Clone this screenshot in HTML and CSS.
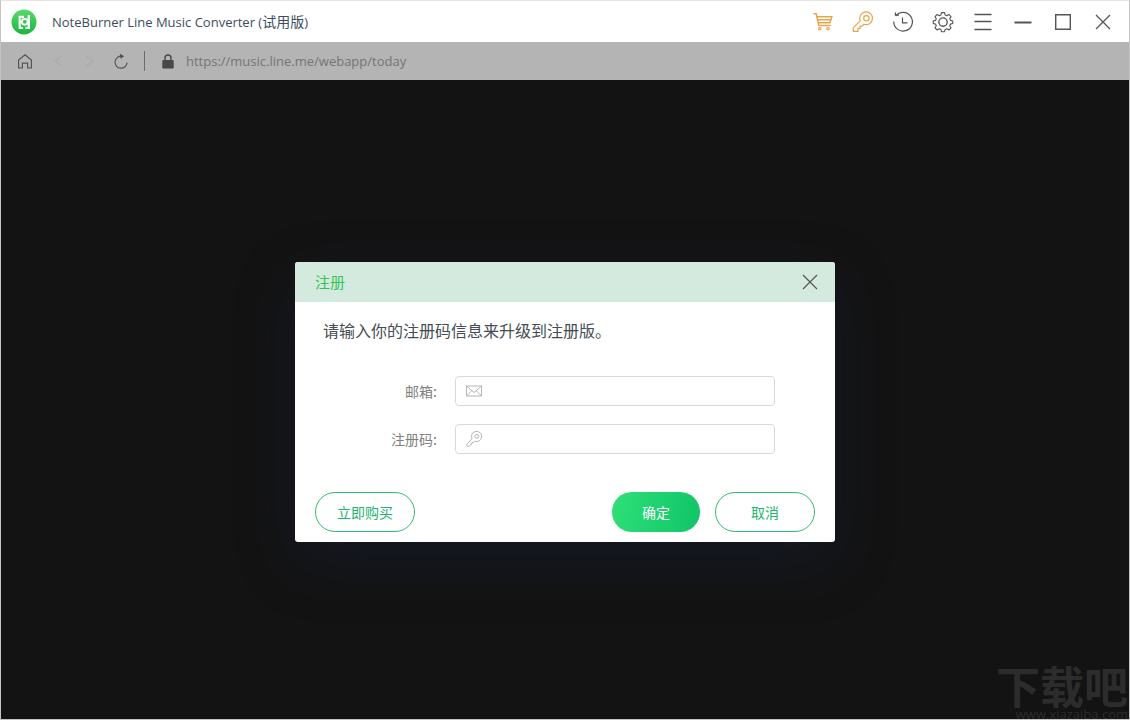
FILE: index.html
```html
<!DOCTYPE html>
<html lang="zh-CN">
<head>
  <meta charset="UTF-8">
  <meta name="viewport" content="width=device-width, initial-scale=1.0">
  <title>NoteBurner Line Music Converter</title>
  <link rel="stylesheet" href="styles.css">
</head>
<body>
  <div class="window">
    <header class="titlebar">
      <svg class="logo" viewBox="0 0 26 26">
        <defs>
          <linearGradient id="logoFill" x1="0" y1="0" x2="0" y2="1">
            <stop offset="0" stop-color="#5bd76c"/>
            <stop offset="1" stop-color="#17b840"/>
          </linearGradient>
        </defs>
        <circle cx="13" cy="13" r="12.5" fill="url(#logoFill)"/>
        <path d="M7.6 20V6.8H13V9H9.8V18H12V20zM16.6 6h2.4v14h-4.6v-2h2.2z" fill="#fff"/>
        <circle cx="13.8" cy="12.8" r="2.9" fill="none" stroke="#fff" stroke-width="1.9"/>
      </svg>
      <h1 class="title">NoteBurner Line Music Converter (<span class="edition">试用版</span>)</h1>
      <nav class="actions">
        <button class="action gold" aria-label="购物车">
          <svg viewBox="0 0 24 24">
            <path d="M2.5 3.8h2.7l2.6 11.8h12M5.9 6.8h14.9l-1.8 6H7.3M6.5 9.8h13.4" stroke-width="1.5"/>
            <circle cx="8.8" cy="18.8" r="1.2"/>
            <circle cx="17" cy="18.8" r="1.2"/>
          </svg>
        </button>
        <button class="action gold" aria-label="注册">
          <svg viewBox="0 0 24 24">
            <path d="M9.2 10.8A6.4 6.4 0 1 1 12.9 14.3L11 16.2H9v2.2H7v2.9H2.3v-3.6z"/>
            <circle cx="15.4" cy="8.3" r="2.7"/>
          </svg>
        </button>
        <button class="action" aria-label="历史">
          <svg viewBox="0 0 24 24">
            <path d="M4.8 6A9.3 9.3 0 1 1 2.8 11.5"/>
            <path d="M8 5.2H4.4V2.4M11.5 7.5v5.3h5"/>
          </svg>
        </button>
        <button class="action" aria-label="设置">
          <svg viewBox="0 0 24 24">
            <g transform="translate(1.1 .9) scale(.91)">
              <path d="M10.3 1.9h3.4l.6 2.6 1.8.8 2.3-1.4 2.4 2.4-1.4 2.3.8 1.8 2.5.6v2.9l-2.5.6-.8 1.8 1.4 2.3-2.4 2.4-2.3-1.4-1.8.8-.6 2.5h-3.4l-.6-2.5-1.8-.8-2.3 1.4-2.4-2.4 1.4-2.3-.8-1.8-2.5-.6V11l2.5-.6.8-1.8-1.4-2.3 2.4-2.4 2.3 1.4 1.8-.8z" stroke-linejoin="round"/>
              <circle cx="12" cy="12.3" r="4.6" stroke-width="1.5"/>
            </g>
          </svg>
        </button>
        <button class="action" aria-label="菜单">
          <svg viewBox="0 0 24 24"><path d="M3.5 4.5h17M3.5 11.5h17M3.5 19.5h17" stroke-width="1.3"/></svg>
        </button>
        <button class="action" aria-label="最小化">
          <svg viewBox="0 0 24 24"><path d="M3.5 12.5h17" stroke-width="2"/></svg>
        </button>
        <button class="action" aria-label="最大化">
          <svg viewBox="0 0 24 24"><path d="M4.7 4.7h14.6v14.6H4.7z" stroke-width="1.4"/></svg>
        </button>
        <button class="action" aria-label="关闭">
          <svg viewBox="0 0 24 24"><path d="M5 5l14 14M19 5L5 19" stroke-width="1.3"/></svg>
        </button>
      </nav>
    </header>

    <div class="toolbar">
      <button class="tool" aria-label="主页">
        <svg viewBox="0 0 24 24"><path d="M5.6 19V11L12 5.8l6.4 5.2v8h-3.8v-4.8H9.4V19z"/></svg>
      </button>
      <button class="tool faint" aria-label="后退" disabled>
        <svg viewBox="0 0 24 24"><path d="M17 6.5L10 12l7 5.5"/></svg>
      </button>
      <button class="tool faint" aria-label="前进" disabled>
        <svg viewBox="0 0 24 24"><path d="M9 6.5l7 5.5-7 5.5"/></svg>
      </button>
      <button class="tool" aria-label="刷新">
        <svg viewBox="0 0 24 24">
          <path d="M13 7.3A6 6 0 1 0 18 13.4"/>
          <path d="M11 4.8l4 2.4-3.4 2.6z" class="solid"/>
        </svg>
      </button>
      <span class="divider"></span>
      <svg class="lock" viewBox="0 0 12 16">
        <path d="M3 8V5a3 3 0 0 1 6 0V8" fill="none" stroke="#484848" stroke-width="1.4"/>
        <rect x="0.3" y="7" width="11.4" height="8.6" rx="1" fill="#484848"/>
      </svg>
      <input class="url" type="text" aria-label="网址" value="https://music.line.me/webapp/today" readonly>
    </div>

    <main class="stage">
      <form class="dialog" role="dialog" aria-labelledby="dialogTitle">
        <div class="dialog-head">
          <h2 class="dialog-title" id="dialogTitle">注册</h2>
          <button class="dialog-close" type="button" aria-label="关闭">
            <svg viewBox="0 0 24 24"><path d="M5 5l14 14M19 5L5 19"/></svg>
          </button>
        </div>
        <div class="dialog-body">
          <p class="message">请输入你的注册码信息来升级到注册版。</p>
          <div class="field">
            <label for="email">邮箱:</label>
            <div class="box">
              <svg viewBox="0 0 18 18"><path d="M1.5 4h15v10h-15zM1.5 4L9 10.5 16.5 4M1.5 14l5.2-5.4M16.5 14l-5.2-5.4"/></svg>
              <input id="email" type="email">
            </div>
          </div>
          <div class="field">
            <label for="code">注册码:</label>
            <div class="box">
              <svg viewBox="0 0 18 18">
                <path d="M7 8.8A5.1 5.1 0 1 1 9.6 11.2L8.3 12.5H7v1.6H5.6L4.6 16q-1 .8-2.6.3-1-1 0-2.4z"/>
                <circle cx="11.8" cy="6.3" r="1.9"/>
              </svg>
              <input id="code" type="text">
            </div>
          </div>
        </div>
        <div class="dialog-foot">
          <button class="btn" type="button">立即购买</button>
          <button class="btn primary" type="submit">确定</button>
          <button class="btn" type="button">取消</button>
        </div>
      </form>

      <div class="watermark">
        <span class="mark-name">下载吧</span>
        <span class="mark-url">www.xiazaiba.com</span>
      </div>
    </main>
  </div>
</body>
</html>
```

FILE: styles.css
```css
* {
  box-sizing: border-box;
}

body {
  margin: 0;
  font-family: "Open Sans", "Noto Sans CJK SC", sans-serif;
  font-size: 14px;
  color: #454d55;
}

h1,
h2,
p {
  margin: 0;
  font-weight: normal;
}

button,
input {
  margin: 0;
  padding: 0;
  border: none;
  background: none;
  font: inherit;
  color: inherit;
}

button {
  cursor: pointer;
}

svg {
  display: block;
  flex: none;
}

.window {
  display: flex;
  flex-direction: column;
  min-height: 100vh;
  border: 1px solid #c4c4c4;
  border-top-color: #e4e4e4;
}

/* title bar */
.titlebar {
  display: flex;
  align-items: center;
  height: 41px;
  padding: 0 6px 0 10px;
  background: #fff;
}

.logo {
  width: 26px;
  height: 26px;
}

.title {
  flex: 1;
  margin-left: 15px;
  font-size: 13px;
  line-height: 20px;
  color: #3d4d60;
}

.edition {
  font-size: 14px;
}

.actions {
  display: flex;
}

.action,
.tool,
.dialog-close {
  display: flex;
  align-items: center;
  justify-content: center;
}

.action {
  width: 40px;
  height: 40px;
}

.action svg,
.tool svg,
.dialog-close svg {
  width: 24px;
  height: 24px;
  fill: none;
  stroke: #555;
  stroke-width: 1.2;
}

.gold svg {
  stroke: #e6a550;
}

/* address bar */
.toolbar {
  display: flex;
  align-items: center;
  height: 38px;
  padding: 0 8px;
  background: #b4b4b4;
}

.tool {
  width: 32px;
  height: 32px;
}

.tool .solid {
  fill: #4a4a4a;
  stroke: none;
}

.faint svg {
  stroke: #aaa;
}

.divider {
  width: 1px;
  height: 20px;
  margin: 0 17px 0 7px;
  background: #6c6c6c;
}

.lock {
  width: 12px;
  height: 16px;
}

.url {
  flex: 1;
  margin-left: 12px;
  font-size: 13px;
  color: #757575;
  outline: none;
}

/* page area */
.stage {
  position: relative;
  display: flex;
  flex: 1;
  align-items: center;
  justify-content: center;
  padding-top: 4px;
  overflow: hidden;
  background: #131313;
}

.dialog {
  width: 540px;
  border-radius: 3px;
  overflow: hidden;
  background: #fff;
  box-shadow: 0 20px 60px rgba(30, 40, 75, 0.3);
  font-family: "Noto Sans CJK SC", sans-serif;
}

.dialog-head {
  display: flex;
  align-items: center;
  justify-content: space-between;
  height: 40px;
  padding: 0 13px 0 20px;
  background: #d4eade;
}

.dialog-title {
  font-size: 15px;
  line-height: 20px;
  color: #35c455;
}

.dialog-body {
  padding: 16px 60px 0 28px;
}

.message {
  margin-bottom: 34px;
  font-size: 16px;
  line-height: 24px;
}

.field {
  display: flex;
  align-items: center;
  justify-content: flex-end;
  margin-bottom: 18px;
  line-height: 20px;
  color: #808080;
}

.box {
  display: flex;
  align-items: center;
  width: 320px;
  height: 30px;
  margin-left: 18px;
  padding: 0 9px;
  border: 1px solid #d8d8d8;
  border-radius: 4px;
}

.box svg {
  width: 18px;
  height: 18px;
  fill: none;
  stroke: #b5b5b5;
}

.box input {
  flex: 1;
  min-width: 0;
  margin-left: 8px;
  outline: none;
}

.dialog-foot {
  display: flex;
  gap: 15px;
  padding: 20px 20px 10px;
}

.btn {
  width: 100px;
  height: 40px;
  border: 1px solid #2fba74;
  border-radius: 20px;
  line-height: 20px;
  color: #22b46c;
}

.btn.primary {
  width: 88px;
  margin-left: auto;
  border: none;
  background: linear-gradient(100deg, #2fe078, #10c468);
  color: #fff;
}

/* site mark in the corner */
.watermark {
  position: absolute;
  right: 1px;
  bottom: -2px;
  display: flex;
  flex-direction: column;
  align-items: flex-end;
  color: #2c2c2c;
}

.mark-name {
  font: bold 44px/44px "Noto Sans CJK SC", sans-serif;
}

.mark-url {
  font-size: 13px;
  line-height: 14px;
}
```
